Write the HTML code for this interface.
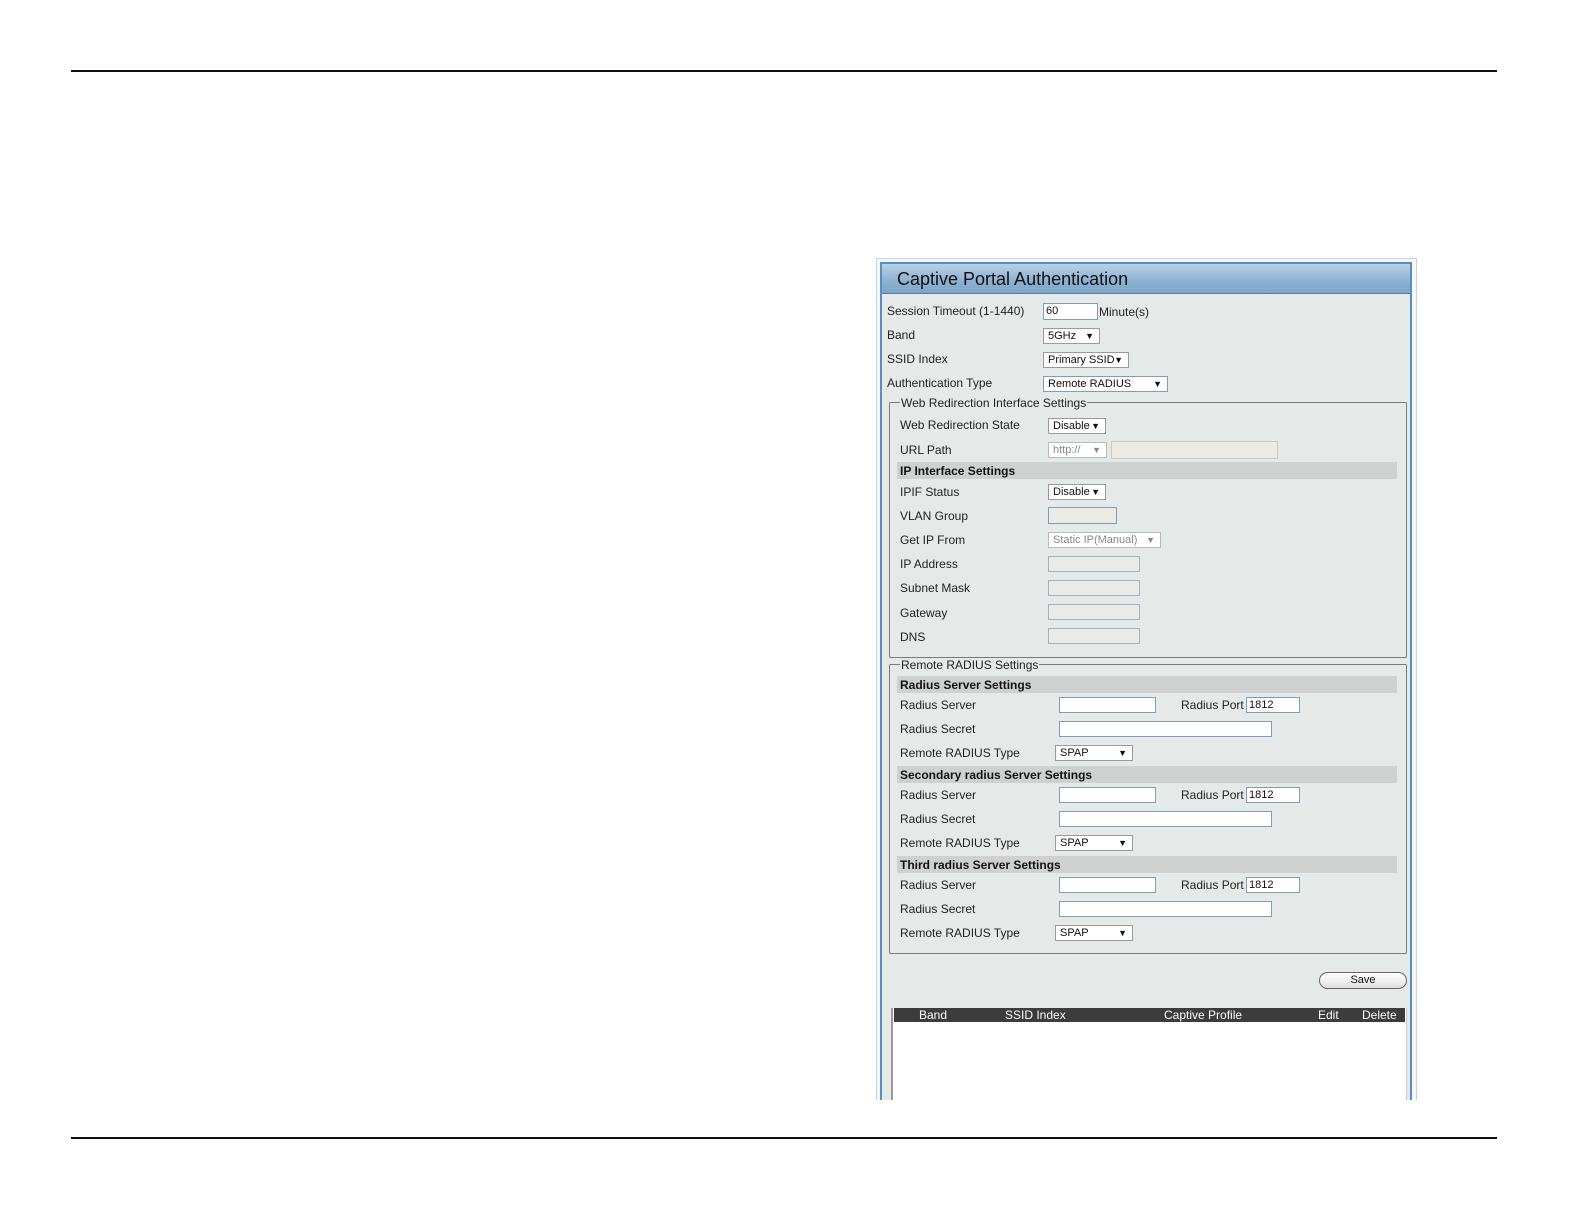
<!DOCTYPE html>
<html><head><meta charset="utf-8">
<style>
*{box-sizing:border-box;margin:0;padding:0}
body{width:1584px;height:1224px;background:#fff;position:relative;overflow:hidden;font-family:"Liberation Sans",sans-serif}
.a{position:absolute}
.hr{position:absolute;left:71px;width:1426px;height:2px;background:#111}
.t{position:absolute;font-size:12px;color:#222;white-space:nowrap;line-height:14px}
.b{font-weight:bold;color:#111}
.in{position:absolute;height:16px;background:#fff;border:1px solid #7f9db9;font-size:11px;line-height:15px;padding-left:2px;color:#111}
.dis{background:#ebeae4;border-color:#9fb3c8}
.sel{position:absolute;height:16px;background:#fff;border:1px solid #9a9a9a;font-size:11px;line-height:15px;padding-left:4px;color:#111}
.sel span{position:absolute;right:5px;top:0;font-size:9px}
.sd{color:#888;border-color:#bbb}
.bar{position:absolute;left:897px;width:500px;height:17px;background:#cfd1d0}
.fs{position:absolute;border:1px solid #7a7a7a;border-radius:2px}
.leg{position:absolute;background:#e5eae8;font-size:12px;color:#222;padding:0 1px;line-height:14px}
</style></head><body>
<div class="hr" style="top:70px"></div>
<div class="hr" style="top:1137px"></div>

<div class="a" style="left:876px;top:258px;width:541px;height:842px;border:1px solid #c8d2dc;border-bottom:none;background:#f4f6f8"></div>
<div class="a" style="left:880px;top:262px;width:532px;height:838px;border:2px solid #5b8ec0;border-bottom:none;background:#e5eae8"></div>
<div class="a" style="left:882px;top:264px;width:528px;height:30px;background:linear-gradient(#b9d1e6,#8fb3d3 55%,#7ea5c8);border-bottom:1px solid #4f7fae"></div>
<div class="t" style="left:897px;top:268px;font-size:18px;line-height:22px;color:#111">Captive Portal Authentication</div>

<div class="t" style="left:887px;top:304px">Session Timeout (1-1440)</div>
<div class="in" style="left:1043px;top:303px;width:55px;height:17px">60</div>
<div class="t" style="left:1099px;top:305px">Minute(s)</div>
<div class="t" style="left:887px;top:328px">Band</div>
<div class="sel" style="left:1043px;top:328px;width:57px">5GHz<span>▼</span></div>
<div class="t" style="left:887px;top:352px">SSID Index</div>
<div class="sel" style="left:1043px;top:352px;width:86px">Primary SSID<span>▼</span></div>
<div class="t" style="left:887px;top:376px">Authentication Type</div>
<div class="sel" style="left:1043px;top:376px;width:125px;border-color:#7f9db9">Remote RADIUS<span>▼</span></div>

<div class="fs" style="left:889px;top:402px;width:518px;height:256px"></div>
<div class="leg" style="left:900px;top:396px">Web Redirection Interface Settings</div>
<div class="t" style="left:900px;top:418px">Web Redirection State</div>
<div class="sel" style="left:1048px;top:418px;width:58px">Disable<span>▼</span></div>
<div class="t" style="left:900px;top:443px">URL Path</div>
<div class="sel sd" style="left:1048px;top:442px;width:59px">http://<span>▼</span></div>
<div class="in dis" style="left:1111px;top:441px;width:167px;height:18px;border-color:#c8c8c8"></div>
<div class="bar" style="top:462px"></div>
<div class="t b" style="left:900px;top:464px">IP Interface Settings</div>
<div class="t" style="left:900px;top:485px">IPIF Status</div>
<div class="sel" style="left:1048px;top:484px;width:58px">Disable<span>▼</span></div>
<div class="t" style="left:900px;top:509px">VLAN Group</div>
<div class="in dis" style="left:1048px;top:507px;width:69px;height:17px;border-color:#7f9db9"></div>
<div class="t" style="left:900px;top:533px">Get IP From</div>
<div class="sel sd" style="left:1048px;top:532px;width:113px">Static IP(Manual)<span>▼</span></div>
<div class="t" style="left:900px;top:557px">IP Address</div>
<div class="in dis" style="left:1048px;top:556px;width:92px"></div>
<div class="t" style="left:900px;top:581px">Subnet Mask</div>
<div class="in dis" style="left:1048px;top:580px;width:92px"></div>
<div class="t" style="left:900px;top:606px">Gateway</div>
<div class="in dis" style="left:1048px;top:604px;width:92px"></div>
<div class="t" style="left:900px;top:630px">DNS</div>
<div class="in dis" style="left:1048px;top:628px;width:92px"></div>

<div class="fs" style="left:889px;top:664px;width:518px;height:290px"></div>
<div class="leg" style="left:900px;top:658px">Remote RADIUS Settings</div>

<div class="bar" style="top:676px"></div>
<div class="t b" style="left:900px;top:678px">Radius Server Settings</div>
<div class="t" style="left:900px;top:698px">Radius Server</div>
<div class="in" style="left:1059px;top:697px;width:97px"></div>
<div class="t" style="left:1181px;top:698px">Radius Port</div>
<div class="in" style="left:1246px;top:697px;width:54px">1812</div>
<div class="t" style="left:900px;top:722px">Radius Secret</div>
<div class="in" style="left:1059px;top:721px;width:213px"></div>
<div class="t" style="left:900px;top:746px">Remote RADIUS Type</div>
<div class="sel" style="left:1055px;top:745px;width:78px">SPAP<span>▼</span></div>

<div class="bar" style="top:766px"></div>
<div class="t b" style="left:900px;top:768px">Secondary radius Server Settings</div>
<div class="t" style="left:900px;top:788px">Radius Server</div>
<div class="in" style="left:1059px;top:787px;width:97px"></div>
<div class="t" style="left:1181px;top:788px">Radius Port</div>
<div class="in" style="left:1246px;top:787px;width:54px">1812</div>
<div class="t" style="left:900px;top:812px">Radius Secret</div>
<div class="in" style="left:1059px;top:811px;width:213px"></div>
<div class="t" style="left:900px;top:836px">Remote RADIUS Type</div>
<div class="sel" style="left:1055px;top:835px;width:78px">SPAP<span>▼</span></div>

<div class="bar" style="top:856px"></div>
<div class="t b" style="left:900px;top:858px">Third radius Server Settings</div>
<div class="t" style="left:900px;top:878px">Radius Server</div>
<div class="in" style="left:1059px;top:877px;width:97px"></div>
<div class="t" style="left:1181px;top:878px">Radius Port</div>
<div class="in" style="left:1246px;top:877px;width:54px">1812</div>
<div class="t" style="left:900px;top:902px">Radius Secret</div>
<div class="in" style="left:1059px;top:901px;width:213px"></div>
<div class="t" style="left:900px;top:926px">Remote RADIUS Type</div>
<div class="sel" style="left:1055px;top:925px;width:78px">SPAP<span>▼</span></div>

<div class="a" style="left:1319px;top:972px;width:88px;height:17px;border:1px solid #666;border-radius:9px;background:linear-gradient(#fff,#e0e0e0);font-size:11px;text-align:center;line-height:15px;color:#111">Save</div>

<div class="a" style="left:891px;top:1008px;width:516px;height:92px;background:#fff;border-left:2px solid #999;border-right:1px solid #ccc"></div>
<div class="a" style="left:894px;top:1008px;width:511px;height:14px;background:#3c3c3c"></div>
<div class="t" style="left:919px;top:1008px;color:#fff">Band</div>
<div class="t" style="left:1005px;top:1008px;color:#fff">SSID Index</div>
<div class="t" style="left:1164px;top:1008px;color:#fff">Captive Profile</div>
<div class="t" style="left:1318px;top:1008px;color:#fff">Edit</div>
<div class="t" style="left:1362px;top:1008px;color:#fff">Delete</div>
</body></html>
